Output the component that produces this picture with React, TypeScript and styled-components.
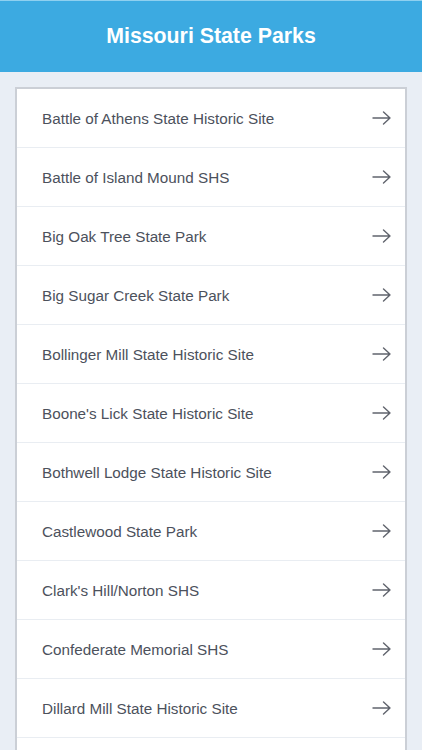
import React from "react";
import styled, { createGlobalStyle } from "styled-components";

const Global = createGlobalStyle`
  html, body { margin: 0; padding: 0; background: #e9eef5; }
  body { font-family: "Liberation Sans", Arial, sans-serif; }
`;

const Page = styled.div`
  width: 422px;
  height: 750px;
  overflow: hidden;
  background: #e9eef5;
  display: flex;
  flex-direction: column;
`;

const Header = styled.header`
  height: 72px;
  flex: none;
  background: #3caae1;
  border-top: 1px solid #8fd0f0;
  box-sizing: border-box;
  display: flex;
  align-items: center;
  justify-content: center;
  color: #ffffff;
  font-weight: bold;
  font-size: 21.3px;
`;

const Card = styled.ul`
  flex: 1;
  list-style: none;
  margin: 15px 15px 0 15px;
  padding: 0;
  background: #ffffff;
  border: 2px solid #cbcfd6;
  border-bottom: none;
`;

const Row = styled.li`
  height: 58px;
  display: flex;
  align-items: center;
  justify-content: space-between;
  padding: 0 14px 0 25px;
  border-bottom: 1px solid #e9edf2;
  color: #4c515c;
  font-size: 15.25px;
`;

const Arrow = () => (
  <svg width="19" height="14" viewBox="0 0 19 14" fill="none" stroke="#60646d" strokeWidth="1.4" strokeLinecap="round" strokeLinejoin="round">
    <path d="M1 7h17M11.5 1L18 7l-6.5 6" />
  </svg>
);

const parks = [
  "Battle of Athens State Historic Site",
  "Battle of Island Mound SHS",
  "Big Oak Tree State Park",
  "Big Sugar Creek State Park",
  "Bollinger Mill State Historic Site",
  "Boone's Lick State Historic Site",
  "Bothwell Lodge State Historic Site",
  "Castlewood State Park",
  "Clark's Hill/Norton SHS",
  "Confederate Memorial SHS",
  "Dillard Mill State Historic Site",
];

export default function App() {
  return (
    <Page>
      <Global />
      <Header>Missouri State Parks</Header>
      <Card>
        {parks.map((p) => (
          <Row key={p}>
            <span>{p}</span>
            <Arrow />
          </Row>
        ))}
      </Card>
    </Page>
  );
}
